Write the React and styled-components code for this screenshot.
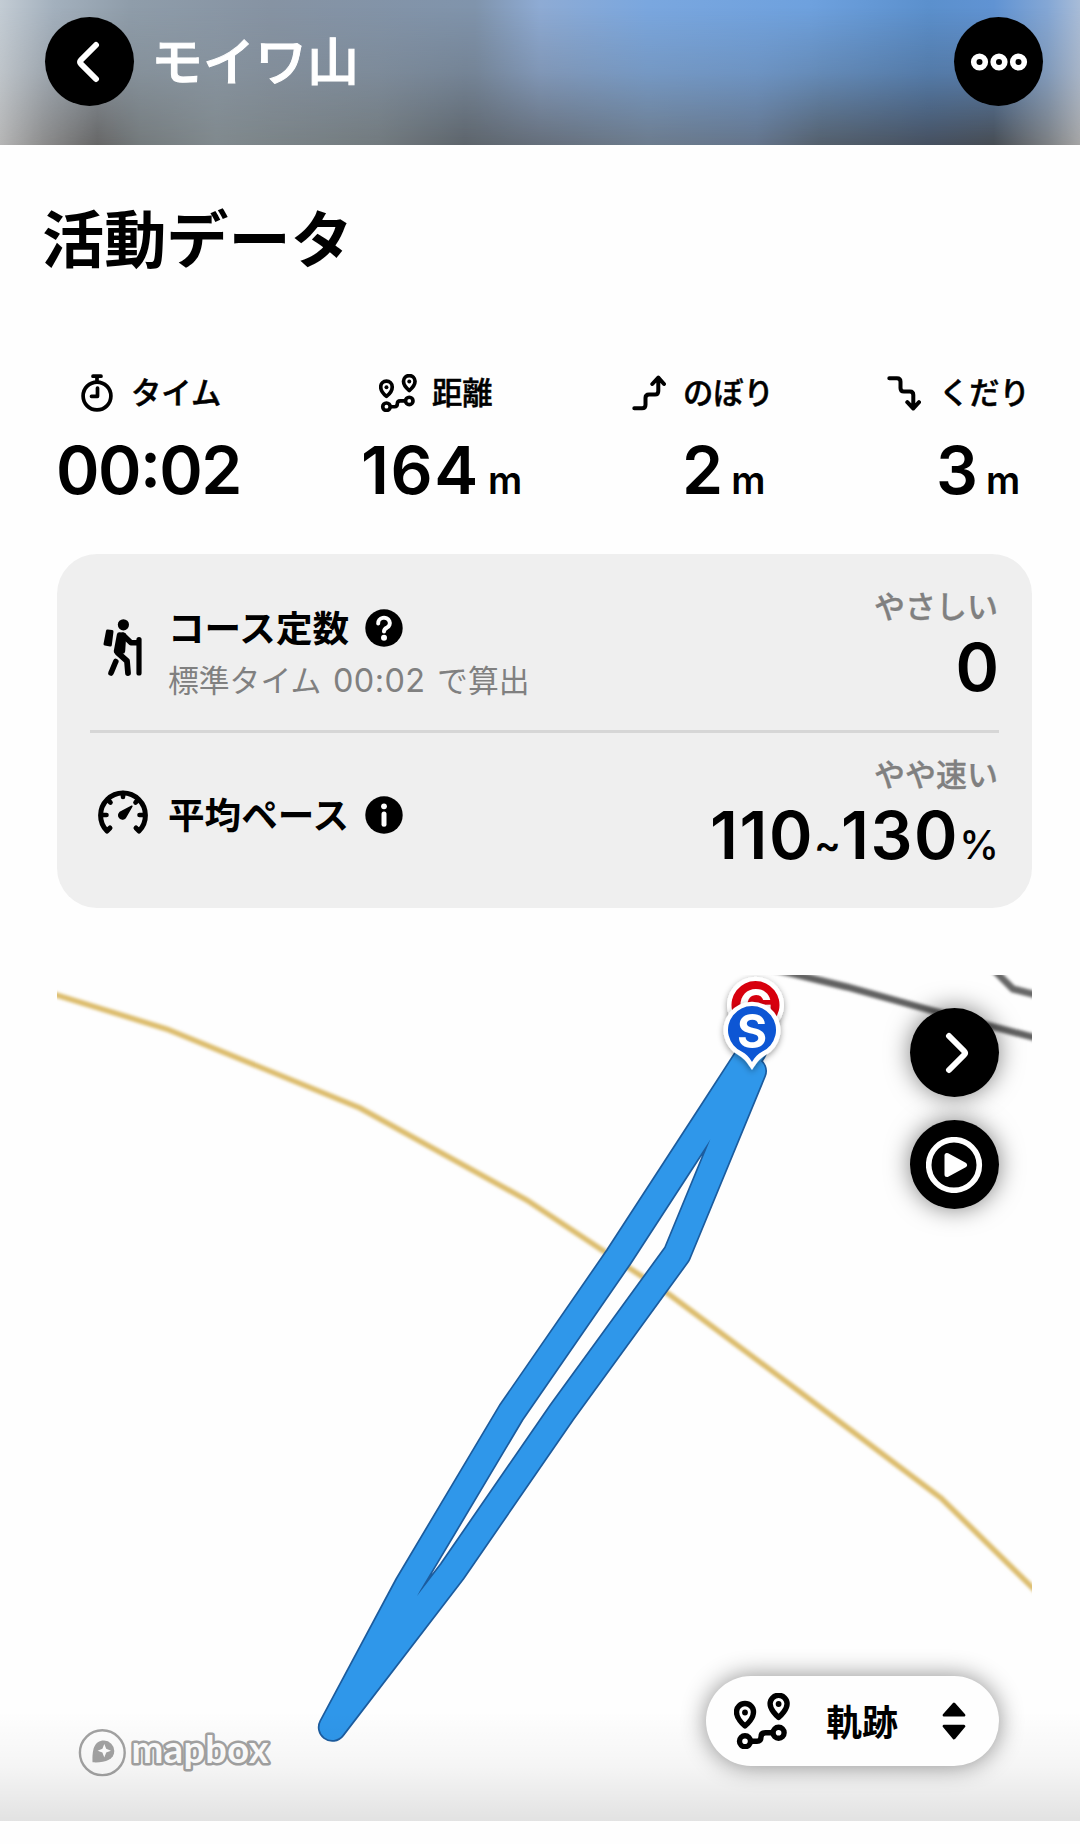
import styled, { createGlobalStyle } from 'styled-components';

const GlobalStyle = createGlobalStyle`
    * {
        box-sizing: border-box;
    }

    body {
        margin: 0;
        background: #fefefe;
        color: #000;
        font-family: Inter, 'Noto Sans CJK JP', sans-serif;
    }

    svg {
        display: block;
        flex-shrink: 0;
    }
`;

const StPage = styled.div`
    position: relative;
    width: 1080px;
    height: 1844px;
    overflow: hidden;
`;

const StHeader = styled.header`
    position: relative;
    display: flex;
    align-items: flex-start;
    height: 145px;
    padding: 17px 37px 0 45px;
    background: linear-gradient(
        90deg,
        #c3ccd4 0%,
        #a3b0bd 5%,
        #8f9daa 12%,
        #8693a3 25%,
        #8094ac 44%,
        #8eabd4 50%,
        #7aa7df 60%,
        #6ea1de 75%,
        #5b90cd 86%,
        #6093d3 92%,
        #84a7d5 97%,
        #a8bcd8 100%
    );

    /* 아래쪽으로 갈수록 어두워지는 배경 */
    &::before {
        content: '';
        position: absolute;
        inset: 0;
        background: linear-gradient(
            90deg,
            #b5b5b5 0%,
            #8c8c8c 4%,
            #666 9%,
            #747a7c 13%,
            #80898d 20%,
            #727a7e 35%,
            #5d646b 43%,
            #656e7a 50%,
            #6c7b8c 60%,
            #64748a 70%,
            #545f6b 76%,
            #46505f 86%,
            #474c52 92%,
            #7c7f82 97%,
            #a5a5a5 100%
        );
        mask-image: linear-gradient(to bottom, transparent 5%, rgba(0, 0, 0, 0.33) 50%, #000 100%);
    }
`;

const StRoundBtn = styled.button`
    position: relative;
    display: flex;
    align-items: center;
    justify-content: center;
    width: 89px;
    height: 89px;
    padding: 0;
    border: none;
    border-radius: 50%;
    background: #000;
    box-shadow: ${({ $floating }) => ($floating ? '0 0 24px rgba(0, 0, 0, 0.5)' : 'none')};
`;

const StHeaderTitle = styled.h1`
    position: relative;
    flex: 1;
    margin: 0 0 0 17px;
    color: #fff;
    font-size: 52px;
    font-weight: 500;
    line-height: 91px;
    -webkit-text-stroke: 1px #fff;
`;

const StSectionTitle = styled.h2`
    height: 139px;
    margin: 0;
    padding: 51px 0 0 42px;
    font-size: 62.2px;
    font-weight: 700;
    line-height: 90px;
`;

const StStats = styled.div`
    display: grid;
    grid-template-columns: 306px 269px 255px 1fr;
    margin-top: 86px;
    padding-left: 57px;
`;

const StStatLabel = styled.div`
    display: flex;
    align-items: center;
    height: 46px;
    gap: ${({ $gap }) => $gap}px;
    padding-left: ${({ $indent }) => $indent}px;
    font-size: 30.3px;
    font-weight: 500;
    -webkit-text-stroke: 0.5px #000;
`;

const StLabelText = styled.span`
    margin-top: -4px;
`;

const StStatValue = styled.div`
    display: flex;
    align-items: baseline;
    gap: 8px;
    height: 80px;
    margin: 14px 0 0 ${({ $indent }) => $indent}px;
    font-size: 66px;
    font-weight: 600;
    font-feature-settings: 'case';
    letter-spacing: ${({ $spacing = 0 }) => $spacing}px;
    line-height: 80px;
`;

const StUnit = styled.span`
    font-size: 38px;
    font-weight: 600;
    letter-spacing: 0;
`;

const StCard = styled.section`
    height: 354px;
    margin: 44px 48px 0 57px;
    padding: 0 33px;
    border-radius: 40px;
    background: #efefef;
`;

const StCardRow = styled.div`
    display: flex;
    height: ${({ $height }) => $height}px;
    padding-top: ${({ $top }) => $top}px;

    & + & {
        border-top: 3px solid #d6d6d6;
    }
`;

const StCardIcon = styled.div`
    display: flex;
    justify-content: center;
    width: 66px;
    padding-top: ${({ $top }) => $top}px;
`;

const StCardMain = styled.div`
    flex: 1;
    padding: ${({ $top }) => $top}px 0 0 12px;
`;

const StCardTitle = styled.div`
    display: flex;
    align-items: center;
    gap: 16px;
    height: 50px;
    font-size: 36.6px;
    font-weight: 600;
`;

const StCardDesc = styled.div`
    margin-top: 3px;
    color: #808080;
    font-size: 30.8px;
    line-height: 50px;
    white-space: nowrap;
`;

const StDescTime = styled.span`
    margin: 0 3px;
    font-size: 32.4px;
    letter-spacing: 0.4px;
`;

const StCardResult = styled.div`
    display: flex;
    flex-direction: column;
    align-items: flex-end;
`;

const StResultLabel = styled.div`
    padding-right: 1px;
    color: #808080;
    font-size: 31px;
    font-weight: 500;
    line-height: 40px;
    -webkit-text-stroke: 0.3px #808080;
`;

const StResultValue = styled.div`
    font-size: 66px;
    font-weight: 600;
    letter-spacing: ${({ $spacing = 0 }) => $spacing}px;
    line-height: 80px;
`;

const StSmall = styled.span`
    font-size: 40px;
    font-weight: ${({ $weight }) => $weight};
    letter-spacing: 0;
`;

const StMap = styled.section`
    position: relative;
    width: 975px;
    height: 846px;
    margin: 67px 0 0 57px;
`;

const StMapControls = styled.div`
    position: absolute;
    top: 33px;
    right: 33px;
    display: flex;
    flex-direction: column;
    gap: 23px;
`;

const StTrackSelect = styled.button`
    position: absolute;
    right: 33px;
    bottom: 55px;
    z-index: 2;
    display: flex;
    align-items: center;
    width: 293px;
    height: 90px;
    padding: 0 33px 0 28px;
    border: none;
    border-radius: 45px;
    background: #fefefe;
    color: #000;
    box-shadow: 0 0 24px rgba(0, 0, 0, 0.45);
    font-family: inherit;
    font-size: 36px;
    font-weight: 600;
`;

const StTrackName = styled.span`
    flex: 1;
    margin-top: -3px;
    padding-left: 36px;
    text-align: left;
`;

const StBottomFade = styled.div`
    position: absolute;
    left: 0;
    right: 0;
    bottom: 23px;
    height: 110px;
    background: linear-gradient(to bottom, rgba(0, 0, 0, 0), rgba(0, 0, 0, 0.035) 50%, rgba(0, 0, 0, 0.11));
`;

const ChevronIcon = ({ flip }) => (
    <svg width="28" height="42" viewBox={flip ? '-4 0 28 42' : '0 0 28 42'} fill="none">
        <path
            d={flip ? 'M4 4 19 19Q21 21 19 23L4 38' : 'M20 4 5 19Q3 21 5 23L20 38'}
            stroke="#fff"
            strokeWidth="6"
            strokeLinecap="round"
            strokeLinejoin="round"
        />
    </svg>
);

const MoreIcon = () => (
    <svg width="58" height="20" viewBox="0 0 58 20" fill="none" stroke="#fff" strokeWidth="5.6">
        <circle cx="9.5" cy="10" r="5.8" />
        <circle cx="29" cy="10" r="5.8" />
        <circle cx="48.5" cy="10" r="5.8" />
    </svg>
);

const PlayIcon = () => (
    <svg width="58" height="56" viewBox="0 0 58 56" fill="none">
        <circle cx="28" cy="28" r="25.3" stroke="#fff" strokeWidth="5.6" />
        <path d="M21 18.5V37.5L38.5 28Z" fill="#fff" stroke="#fff" strokeWidth="5" strokeLinejoin="round" />
    </svg>
);

const StopwatchIcon = () => (
    <svg width="32" height="38" viewBox="0 0 32 38" fill="none" stroke="#000" strokeWidth="3.7">
        <circle cx="16" cy="22" r="13.9" />
        <path d="M12 2.2H20M16 3V8M16.5 14V22.3H10.5" strokeLinecap="round" strokeLinejoin="round" />
    </svg>
);

const RouteIcon = ({ size }) => (
    <svg width={size} height={size} viewBox="0 0 56 56" fill="none" stroke="#000" strokeWidth="5.4">
        <path d="M11 33C8.5 31 2.5 25 2.5 19a8.5 8.5 0 0 1 17 0C19.5 25 13.5 31 11 33Z" strokeLinejoin="round" />
        <path d="M44.6 24.4C42.1 22.4 36.1 16.4 36.1 10.8a8.5 8.5 0 0 1 17 0C53.1 16.4 47.1 22.4 44.6 24.4Z" strokeLinejoin="round" />
        <circle cx="11" cy="19.5" r="2.9" fill="#000" stroke="none" />
        <circle cx="44.6" cy="11" r="2.9" fill="#000" stroke="none" />
        <circle cx="11" cy="48.2" r="5.5" />
        <circle cx="44.6" cy="39.7" r="5.5" />
        <path d="M17 48.2H23Q27 48.2 27 44T31.5 39.7H38.5" />
    </svg>
);

const ClimbIcon = () => (
    <svg width="34" height="36" viewBox="0 0 34 36" fill="none" stroke="#000" strokeWidth="4" strokeLinecap="round" strokeLinejoin="round">
        <path d="M2.3 33.3H10Q13.5 33.3 13.5 29.8V23Q13.5 19.5 17 19.5H23Q26.3 19.5 26.3 16V3M20.3 9 26.3 2.5 32 9" />
    </svg>
);

const DescentIcon = () => (
    <svg width="34" height="36" viewBox="0 0 34 36" fill="none" stroke="#000" strokeWidth="4" strokeLinecap="round" strokeLinejoin="round">
        <path d="M2.3 3.3H10Q13.5 3.3 13.5 6.8V13Q13.5 16.5 17 16.5H23Q26.3 16.5 26.3 20V33M20.3 27.2 26.3 33.5 32 27.2" />
    </svg>
);

const HikerIcon = () => (
    <svg width="40" height="58" viewBox="0 0 40 58" fill="none" stroke="#000" strokeLinecap="round" strokeLinejoin="round">
        <circle cx="20.4" cy="5.8" r="5.6" fill="#000" stroke="none" />
        <path d="M4.5 12 9 12.5 7.3 26 2 25Z" fill="#000" strokeWidth="3" />
        <path d="M16.5 16 20.5 16.5 19.5 32 13.5 32Z" fill="#000" strokeWidth="5.4" />
        <path d="M20 16 28 23.8H35" strokeWidth="5.4" />
        <path d="M14.5 33.5 24 42 25 54" strokeWidth="5.8" />
        <path d="M12.8 42.5 8 54" strokeWidth="5.6" />
        <path d="M36 20.5V54" strokeWidth="5.2" />
    </svg>
);

const GaugeIcon = () => (
    <svg width="50" height="45" viewBox="0 0 50 45" fill="none" stroke="#000" strokeWidth="5" strokeLinecap="round">
        <path d="M9 41A22.4 22.4 0 1 1 41 41M9 41 12 38M41 41 38 38" />
        <path d="M4 25H8.5M46 25H41.5M25 3V7M10.5 10.5 12.5 12.5M39.5 10.5 37.5 12.5" strokeWidth="4.6" />
        <path d="M33.8 16.3 22 22.5A3.6 3.6 0 1 0 27 28Z" fill="#000" strokeWidth="1.6" strokeLinejoin="round" />
    </svg>
);

const HelpIcon = () => (
    <svg width="38" height="38" viewBox="0 0 38 38" fill="none">
        <circle cx="19" cy="19" r="18.7" fill="#000" />
        <path d="M13.2 14.5A5.8 5.3 0 1 1 22 18.6Q19 20 19 22.5" stroke="#fff" strokeWidth="4" strokeLinecap="round" />
        <circle cx="19" cy="28.8" r="3" fill="#fff" />
    </svg>
);

const InfoIcon = () => (
    <svg width="38" height="38" viewBox="0 0 38 38" fill="none">
        <circle cx="19" cy="19" r="18.7" fill="#000" />
        <circle cx="19" cy="10.3" r="2.9" fill="#fff" />
        <path d="M19 18V28.3" stroke="#fff" strokeWidth="5" strokeLinecap="round" />
    </svg>
);

const SortIcon = () => (
    <svg width="24" height="38" viewBox="0 0 24 38" fill="#000" stroke="#000" strokeWidth="2.8" strokeLinejoin="round">
        <path d="M12 2 22 13.2H2Z" />
        <path d="M12 36 22 24.2H2Z" />
    </svg>
);

const ROUTE = '752.5,1071 677,1254 562,1412 452,1571.5 332.3,1727.3 408.3,1585.2 511,1412.8 618.3,1257.5 715.5,1108 753,1050';

const MapPin = ({ x, y, color, letter }) => (
    <g transform={`translate(${x} ${y})`} filter="url(#pinShadow)">
        <path d="M0 40C-4 34-7 29-13 25.5A28.5 28.5 0 1 1 13 25.5C7 29 4 34 0 40Z" fill="#fff" />
        <path d="M0 32C-3 27-6 24-10 21.8A24 24 0 1 1 10 21.8C6 24 3 27 0 32Z" fill={color} />
        <text y="17.5" fill="#fff" fontFamily="Inter" fontSize="46" fontWeight="700" textAnchor="middle">
            {letter}
        </text>
    </g>
);

const TrackMap = () => (
    <svg width="975" height="846" viewBox="57 975 975 846" fill="none">
        <defs>
            <filter id="pinShadow" x="-40%" y="-40%" width="180%" height="180%">
                <feDropShadow dx="0" dy="2" stdDeviation="3" floodOpacity="0.4" />
            </filter>
            <filter id="softRoad" x="-5%" y="-20%" width="110%" height="140%">
                <feGaussianBlur stdDeviation="1.4" />
            </filter>
        </defs>

        <g filter="url(#softRoad)">
            <polyline
                points="50,993 166.7,1029 360,1108 526.7,1200 605,1252 670,1295 800,1392 941,1498 1040,1595"
                stroke="#dcbc6c"
                strokeWidth="5.5"
            />
            <polyline points="765,967 790,973 847,987 930,1010 1040,1039" stroke="#606060" strokeWidth="7" />
            <polyline points="990,966 1013,989 1040,996" stroke="#666" strokeWidth="7" />
        </g>

        <g strokeLinecap="round" strokeLinejoin="round">
            <polyline points={ROUTE} stroke="#1c5c9e" strokeWidth="29" />
            <polyline points={ROUTE} stroke="#2f97ea" strokeWidth="25.6" />
        </g>

        <MapPin x={755.5} y={1005} color="#d7000f" letter="G" />
        <MapPin x={752} y={1030} color="#0b57d4" letter="S" />

        <g stroke="#a3a3a3">
            <circle cx="102.3" cy="1752.7" r="22.4" fill="#fefefe" strokeWidth="2.4" />
            <path d="M92.5 1762.3C92 1750 94 1740.5 104 1740.5A10.6 10.6 0 0 1 114.3 1751C114.3 1760 104 1763 92.5 1762.3Z" fill="#a3a3a3" stroke="none" />
            <path d="M104.3 1744 106.2 1748.8 111 1750.7 106.2 1752.6 104.3 1757.5 102.4 1752.6 97.6 1750.7 102.4 1748.8Z" fill="#fff" stroke="none" />
            <text
                x="131.5"
                y="1762.5"
                fill="#fff"
                strokeWidth="5"
                paintOrder="stroke"
                strokeLinejoin="round"
                fontFamily="Lato"
                fontSize="38"
                fontWeight="700"
                textLength="137"
            >
                mapbox
            </text>
        </g>
    </svg>
);

const STATS = [
    { label: 'タイム', icon: <StopwatchIcon />, value: '00:02', labelIndent: 24, gap: 18, valueIndent: -1, spacing: -1.6 },
    { label: '距離', icon: <RouteIcon size={38} />, value: '164', unit: 'm', labelIndent: 16, gap: 15, valueIndent: -2, spacing: 1.6 },
    { label: 'のぼり', icon: <ClimbIcon />, value: '2', unit: 'm', labelIndent: 0, gap: 17, valueIndent: 50 },
    { label: 'くだり', icon: <DescentIcon />, value: '3', unit: 'm', labelIndent: 0, gap: 18, valueIndent: 49 },
];

const App = () => {
    return (
        <StPage>
            <GlobalStyle />
            <StHeader>
                <StRoundBtn>
                    <ChevronIcon />
                </StRoundBtn>
                <StHeaderTitle>モイワ山</StHeaderTitle>
                <StRoundBtn>
                    <MoreIcon />
                </StRoundBtn>
            </StHeader>

            <StSectionTitle>活動データ</StSectionTitle>

            <StStats>
                {STATS.map((stat) => (
                    <div key={stat.label}>
                        <StStatLabel $indent={stat.labelIndent} $gap={stat.gap}>
                            {stat.icon}
                            <StLabelText>{stat.label}</StLabelText>
                        </StStatLabel>
                        <StStatValue $indent={stat.valueIndent} $spacing={stat.spacing}>
                            {stat.value}
                            {stat.unit && <StUnit>{stat.unit}</StUnit>}
                        </StStatValue>
                    </div>
                ))}
            </StStats>

            <StCard>
                <StCardRow $height={176} $top={33}>
                    <StCardIcon $top={32}>
                        <HikerIcon />
                    </StCardIcon>
                    <StCardMain $top={16}>
                        <StCardTitle>
                            <StLabelText>コース定数</StLabelText>
                            <HelpIcon />
                        </StCardTitle>
                        <StCardDesc>
                            標準タイム <StDescTime>00:02</StDescTime> で算出
                        </StCardDesc>
                    </StCardMain>
                    <StCardResult>
                        <StResultLabel>やさしい</StResultLabel>
                        <StResultValue>0</StResultValue>
                    </StCardResult>
                </StCardRow>
                <StCardRow $height={178} $top={22}>
                    <StCardIcon $top={35}>
                        <GaugeIcon />
                    </StCardIcon>
                    <StCardMain $top={35}>
                        <StCardTitle>
                            <StLabelText>平均ペース</StLabelText>
                            <InfoIcon />
                        </StCardTitle>
                    </StCardMain>
                    <StCardResult>
                        <StResultLabel>やや速い</StResultLabel>
                        <StResultValue $spacing={1.6}>
                            110<StSmall $weight={600}>~</StSmall>130<StSmall $weight={500}>%</StSmall>
                        </StResultValue>
                    </StCardResult>
                </StCardRow>
            </StCard>

            <StMap>
                <TrackMap />
                <StMapControls>
                    <StRoundBtn $floating>
                        <ChevronIcon flip />
                    </StRoundBtn>
                    <StRoundBtn $floating>
                        <PlayIcon />
                    </StRoundBtn>
                </StMapControls>
                <StTrackSelect>
                    <RouteIcon size={56} />
                    <StTrackName>軌跡</StTrackName>
                    <SortIcon />
                </StTrackSelect>
            </StMap>

            <StBottomFade />
        </StPage>
    );
};

export default App;
